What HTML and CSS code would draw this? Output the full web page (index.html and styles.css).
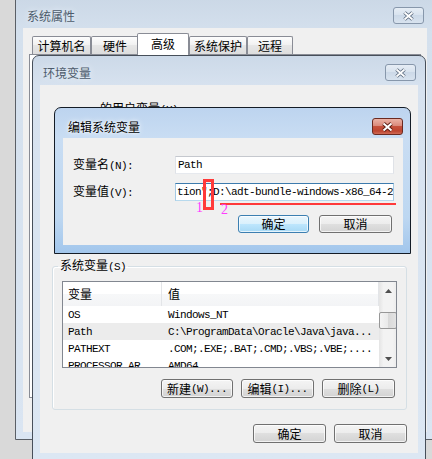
FILE: index.html
```html
<!DOCTYPE html>
<html lang="zh-CN">
<head>
<meta charset="utf-8">
<title>编辑系统变量</title>
<link rel="stylesheet" href="styles.css">
</head>
<body>
<div class="desk">
  <section class="win win-sys">
    <div class="titlebar">
      <span class="title">系统属性</span>
      <span class="close"><svg width="13" height="10" viewBox="0 0 13 10"><path d="M2.5 1.5 L10.5 8.5 M10.5 1.5 L2.5 8.5" stroke="#5b6a7e" stroke-width="3.6" fill="none"/><path d="M2.5 1.5 L10.5 8.5 M10.5 1.5 L2.5 8.5" stroke="#fff" stroke-width="1.8" fill="none"/></svg></span>
    </div>
    <div class="client client-sys">
      <div class="tabs">
        <div class="tab w1">计算机名</div>
        <div class="tab w2">硬件</div>
        <div class="tab sel">高级</div>
        <div class="tab w4">系统保护</div>
        <div class="tab w5">远程</div>
      </div>
      <div class="tabpanel"></div>
    </div>
  </section>

  <section class="win win-env">
    <div class="titlebar">
      <span class="title">环境变量</span>
      <span class="close"><svg width="13" height="10" viewBox="0 0 13 10"><path d="M2.5 1.5 L10.5 8.5 M10.5 1.5 L2.5 8.5" stroke="#5b6a7e" stroke-width="3.6" fill="none"/><path d="M2.5 1.5 L10.5 8.5 M10.5 1.5 L2.5 8.5" stroke="#fff" stroke-width="1.8" fill="none"/></svg></span>
    </div>
    <div class="client client-env">
      <div class="ulabel">的用户变量<span class="m">(U)</span></div>
      <div class="spacer"></div>
      <fieldset class="group">
        <legend>系统变量<span class="m">(S)</span></legend>
        <div class="list">
          <div class="cols">
            <div class="lh">
              <div class="c1">变量</div>
              <div class="c2">值</div>
            </div>
            <div class="row m"><div class="c1">OS</div><div class="c2">Windows_NT</div></div>
            <div class="row m hl"><div class="c1">Path</div><div class="c2">C:\ProgramData\Oracle\Java\java...</div></div>
            <div class="row m"><div class="c1">PATHEXT</div><div class="c2">.COM;.EXE;.BAT;.CMD;.VBS;.VBE;....</div></div>
            <div class="row m"><div class="c1">PROCESSOR_AR</div><div class="c2">AMD64</div></div>
          </div>
          <div class="vs">
            <div class="arr"><svg width="7" height="4" viewBox="0 0 7 4"><path d="M0 4 L3.5 0 L7 4 Z" fill="#4f4f4f"/></svg></div>
            <div class="gap"></div>
            <div class="thumb"></div>
            <div class="fill"></div>
            <div class="arr"><svg width="7" height="4" viewBox="0 0 7 4"><path d="M0 0 L3.5 4 L7 0 Z" fill="#4f4f4f"/></svg></div>
          </div>
        </div>
        <div class="btnrow grp-btns">
          <div class="btn b72">新建<span class="m">(W)...</span></div>
          <div class="btn">编辑<span class="m">(I)...</span></div>
          <div class="btn">删除<span class="m">(L)</span></div>
        </div>
      </fieldset>
      <div class="btnrow env-btns">
        <div class="btn">确定</div>
        <div class="btn">取消</div>
      </div>
    </div>
  </section>

  <section class="win win-edit">
    <div class="titlebar">
      <span class="title">编辑系统变量</span>
      <span class="close red"><svg width="13" height="10" viewBox="0 0 13 10"><path d="M2.5 1.5 L10.5 8.5 M10.5 1.5 L2.5 8.5" stroke="#5a1c12" stroke-width="3.8" fill="none"/><path d="M2.5 1.5 L10.5 8.5 M10.5 1.5 L2.5 8.5" stroke="#fff" stroke-width="2" fill="none"/></svg></span>
    </div>
    <div class="client client-edit">
      <div class="field">
        <label>变量名<span class="m">(N):</span></label>
        <div class="inp m">Path</div>
      </div>
      <div class="field">
        <label>变量值<span class="m">(V):</span></label>
        <div class="inp focus m">tion";D:\adt-bundle-windows-x86_64-20140702\sdk</div>
      </div>
      <div class="btnrow edit-btns">
        <div class="btn def ok">确定</div>
        <div class="btn">取消</div>
      </div>
    </div>
  </section>

  <div class="mark-box"></div>
  <div class="mark-line"></div>
  <div class="mark-num n1">1</div>
  <div class="mark-num n2">2</div>
</div>
</body>
</html>
```
FILE: styles.css
```css
* { box-sizing: border-box; }
html, body { margin: 0; padding: 0; }
body {
  width: 432px;
  height: 459px;
  overflow: hidden;
  background: #d9d9d9;
  font: 12px/16px "Noto Sans CJK SC", "Liberation Sans", sans-serif;
  color: #000;
}
.desk { position: relative; width: 432px; height: 459px; overflow: hidden; }

.m {
  font-family: "Liberation Mono", "Noto Sans CJK SC", monospace;
  font-size: 11px;
  letter-spacing: -0.6px;
}

/* windows */
.win {
  position: absolute;
  display: flex;
  flex-direction: column;
  border: 1px solid #4e5968;
  border-radius: 7px 7px 0 0;
}
.win-sys {
  left: 15px; top: -10px; width: 420px; height: 450px;
  padding: 0 7px 7px;
  border-color: #5a5f66;
  background: linear-gradient(#c9d6e5, #d4e0ed 40px, #dae5f2);
}
.win-env {
  left: 32px; top: 55px; width: 394px; height: 406px;
  padding: 0 7px 7px;
  border-color: #474f5a;
  background: linear-gradient(#ccd9e8, #d7e2ef 30px, #dce7f3);
}
.win-edit {
  left: 54px; top: 107px; width: 357px; height: 147px;
  padding: 0 7px 8px 8px;
  border-color: #141c26;
  background: linear-gradient(#bdd4ef, #c9ddf3 30px, #bdd7f1 110px, #a2c6ec);
}

.titlebar {
  flex: none;
  display: flex;
  align-items: center;
  justify-content: space-between;
}
.win-sys .titlebar { height: 37px; padding: 16px 3px 4px 4px; }
.win-env .titlebar { height: 29px; padding: 8px 2px 4px 3px; }
.win-edit .titlebar { height: 30px; padding: 10px 0 3px 5px; }

.title { color: #4d5b6b; text-shadow: 0 0 6px #eef4fb; }
.win-edit .title { color: #000; text-shadow: 0 0 6px #fff, 0 0 3px #fff; }

.close {
  width: 31px; height: 17px;
  display: flex; align-items: center; justify-content: center;
  border: 1px solid #8797ab;
  border-radius: 3px;
  background: linear-gradient(#e6edf5, #d7e2ee 50%, #ccd9e8 50%, #d8e3ef);
}
.close.red {
  border-color: #6b2a20;
  background: linear-gradient(#ebb2a5, #da8a7b 45%, #c6513c 50%, #bd4530 80%, #d06a55);
}

.client { flex: 1; min-height: 0; background: #f0f0f0; }

/* system properties tabs */
.client-sys { padding: 5px 0 0 6px; }
.tabs {
  display: flex;
  align-items: flex-end;
  height: 22px;
  margin-left: 3px;
  position: relative;
  z-index: 1;
}
.tab {
  flex: none;
  height: 18px;
  margin-bottom: 1px;
  border: 1px solid #898c95;
  border-bottom: 0;
  border-radius: 2px 2px 0 0;
  background: linear-gradient(#fdfdfd, #f1f1f1 45%, #e6e6e6 50%, #dddddd);
  display: flex; align-items: center; justify-content: center;
}
.w1 { width: 59px; }
.w2 { width: 48px; }
.w4 { width: 58px; }
.w5 { width: 46px; }
.tab.sel {
  width: 52px;
  height: 22px;
  margin-bottom: 0;
  margin-left: -2px;
  padding-bottom: 2px;
  background: #fff;
  position: relative;
  z-index: 1;
}
.tabpanel {
  width: 392px;
  height: 344px;
  margin-top: -1px;
  border: 1px solid #898c95;
  background: #fff;
}

/* environment variables */
.client-env { padding: 15px 11px 0 12px; }
.ulabel { margin-left: 48px; height: 16px; }
.spacer { height: 141px; }

fieldset.group {
  margin: 0;
  min-width: 0;
  padding: 6px 9px 11px;
  border: 1px solid #d5dfe5;
  border-radius: 3px;
  box-shadow: inset 1px 1px 0 #fff;
}
fieldset.group legend {
  padding: 0 2px;
  margin-left: -4px;
  line-height: 16px;
}

.list {
  height: 87px;
  border: 1px solid #828790;
  background: #fff;
  display: flex;
  overflow: hidden;
}
.cols { width: 316px; flex: none; overflow: hidden; }
.lh {
  height: 24px;
  display: flex;
  align-items: center;
  background: linear-gradient(#ffffff 50%, #f7f8f9 50%, #f3f4f6);
}
.lh .c1 { border-right: 1px solid #e3e5e8; height: 24px; display: flex; align-items: center; }
.lh .c2 { flex: 1; height: 24px; display: flex; align-items: center; border-right: 1px solid #e3e5e8; }
.c1 { width: 99px; flex: none; padding-left: 5px; overflow: hidden; white-space: nowrap; }
.c2 { flex: 1; padding-left: 6px; overflow: hidden; white-space: nowrap; }
.row { height: 17px; display: flex; align-items: center; }
.row.hl { background: #ececec; }

.vs {
  width: 18px;
  flex: none;
  display: flex;
  flex-direction: column;
  background: linear-gradient(90deg, #e4e4e4, #f3f3f3 25%, #f3f3f3 75%, #ebebeb);
}
.vs .arr { height: 17px; flex: none; display: flex; align-items: center; justify-content: center; }
.vs .gap { height: 13px; flex: none; }
.vs .thumb {
  height: 17px;
  flex: none;
  border: 1px solid #979797;
  border-radius: 2px;
  background: linear-gradient(90deg, #f4f4f4, #e9e9e9 50%, #d8d8d8 50%, #e3e3e3);
}
.vs .fill { flex: 1; }

/* buttons */
.btnrow { display: flex; justify-content: flex-end; }
.btn {
  flex: none;
  width: 73px;
  height: 19px;
  border: 1px solid #707070;
  border-radius: 3px;
  background: linear-gradient(#f4f4f4, #ececec 50%, #dfdfdf 50%, #d3d3d3);
  box-shadow: inset 0 0 0 1px rgba(255, 255, 255, 0.7);
  display: flex; align-items: center; justify-content: center;
  white-space: nowrap;
}
.btn.b72 { width: 72px; }
.btn.def {
  border-color: #3c7fb1;
  background: linear-gradient(#eaf6fd, #d9f0fc 50%, #bee6fd 50%, #a7d9f5);
}
.grp-btns { margin-top: 11px; padding-right: 2px; gap: 8px; }
.env-btns { margin-top: 14px; gap: 8px; }

/* edit dialog */
.client-edit { padding: 18px 9px 11px 10px; }
.field { display: flex; align-items: center; height: 18px; }
.field + .field { margin-top: 9px; }
.field label { width: 102px; flex: none; }
.inp {
  width: 219px;
  height: 18px;
  flex: none;
  border: 1px solid;
  border-color: #c5c8ce #dfe2e7 #e6e9ee #dfe2e7;
  background: #fff;
  padding-left: 2px;
  line-height: 16px;
  white-space: nowrap;
  overflow: hidden;
}
.inp.focus {
  border-color: #3d7bad #a4c9e3 #b7d9ed #a4c9e3;
  padding-left: 1px;
}
.edit-btns { margin-top: 14px; padding-right: 2px; gap: 10px; }
.edit-btns .btn { height: 18px; }
.edit-btns .ok { width: 71px; }

/* annotations drawn over the screenshot */
.mark-box {
  position: absolute;
  left: 203px; top: 179px;
  width: 11px; height: 31px;
  border: 3px solid #ff3a3a;
}
.mark-line {
  position: absolute;
  left: 220px; top: 203px;
  width: 176px; height: 2px;
  background: #ff3a3a;
}
.mark-num {
  position: absolute;
  font: 14px/14px "Liberation Serif", serif;
  color: #ff3cff;
}
.n1 { left: 196px; top: 201px; }
.n2 { left: 221px; top: 203px; }
```
